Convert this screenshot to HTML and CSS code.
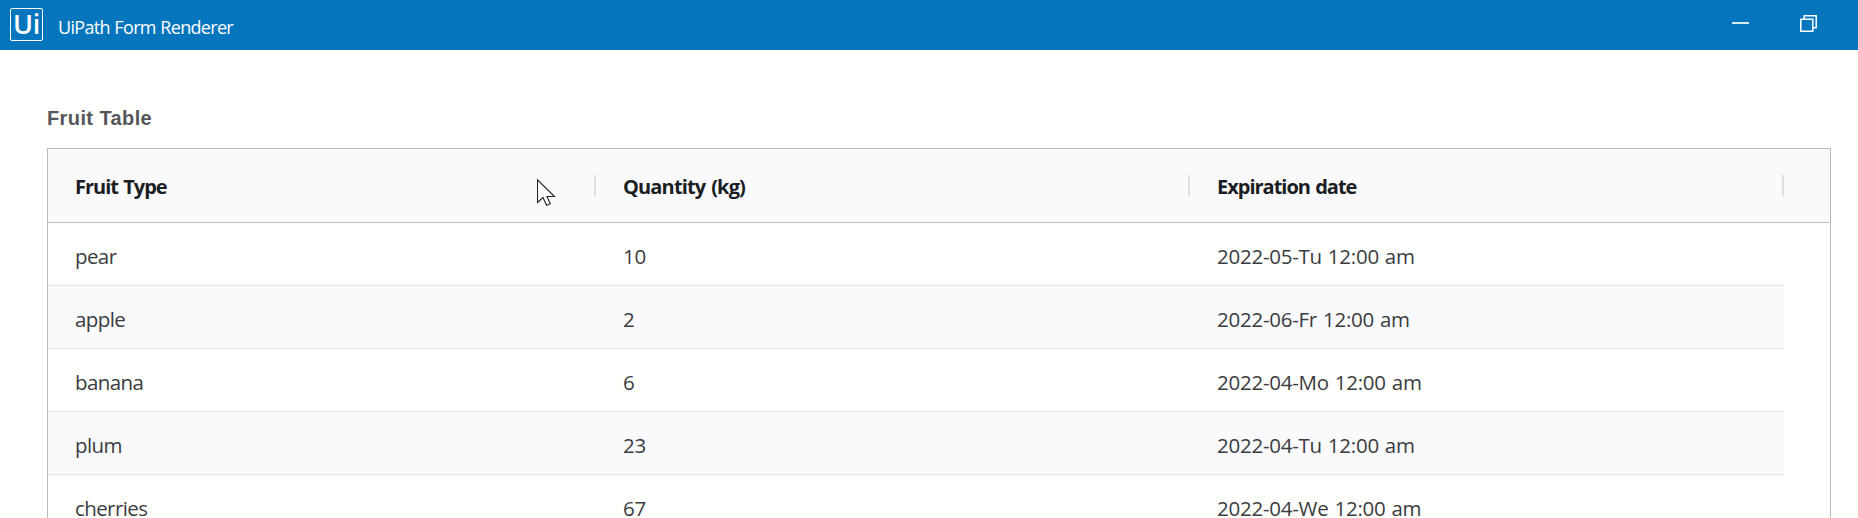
FILE: index.html
```html
<!DOCTYPE html>
<html lang="en">
<head>
<meta charset="utf-8">
<title>UiPath Form Renderer</title>
<link rel="stylesheet" href="styles.css">
</head>
<body>
<header class="titlebar">
  <div class="logo"><span>Ui</span></div>
  <div class="app-name">UiPath Form Renderer</div>
  <div class="controls">
    <svg width="17" height="17" viewBox="0 0 17 17"><path d="M0 8h17" stroke="#fff" stroke-width="1.7"/></svg>
    <svg width="17" height="17" viewBox="0 0 17 17" fill="none" stroke="#fff" stroke-width="1.5"><path d="M.8 4.2h12v12H.8zM4.2 4V.8h12v12H13"/></svg>
  </div>
</header>
<main class="form">
  <h1 class="label">Fruit Table</h1>
  <div class="grid">
    <div class="row head">
      <div class="cell type">Fruit Type</div>
      <div class="cell quantity">Quantity (kg)</div>
      <div class="cell expiration">Expiration date</div>
    </div>
    <div class="row"><div class="cell">pear</div><div class="cell number">10</div><div class="cell date">2022-05-Tu 12:00 am</div></div>
    <div class="row alt"><div class="cell">apple</div><div class="cell number">2</div><div class="cell date">2022-06-Fr 12:00 am</div></div>
    <div class="row"><div class="cell">banana</div><div class="cell number">6</div><div class="cell date">2022-04-Mo 12:00 am</div></div>
    <div class="row alt"><div class="cell">plum</div><div class="cell number">23</div><div class="cell date">2022-04-Tu 12:00 am</div></div>
    <div class="row last"><div class="cell">cherries</div><div class="cell number">67</div><div class="cell date">2022-04-We 12:00 am</div></div>
  </div>
</main>
<svg class="cursor" width="20" height="28" viewBox="0 0 20 28"><path d="M.5 .8V23.5L6 18.5L9.5 26.3L13.3 24.7L10 17.5H17.5Z" fill="#fff" stroke="#222" stroke-width="1.1"/></svg>
</body>
</html>
```

FILE: styles.css
```css
* { box-sizing: border-box; }
body {
  margin: 0;
  height: 518px;
  overflow: hidden;
  background: #fffffd;
  font-family: "Open Sans", "Noto Sans", sans-serif;
}
.titlebar {
  display: flex;
  height: 50px;
  padding: 8px 41px 0 10px;
  background: #0575be;
  color: #fff;
}
.logo {
  width: 33px;
  height: 33px;
  border: 1.5px solid #fff;
  border-radius: 2px;
  font: 600 27px/29px "Open Sans", sans-serif;
  letter-spacing: -0.3px;
  text-align: center;
}
.app-name {
  margin-left: 15px;
  font-size: 18px;
  line-height: 39px;
  letter-spacing: -0.68px;
  word-spacing: 0.5px;
}
.controls { display: flex; gap: 51px; margin: 7px 0 0 auto; }
.form { padding: 0 27px 0 47px; }
.label {
  margin: 0;
  height: 98px;
  padding-top: 56px;
  font: bold 20px/24px "Liberation Sans", Arial, sans-serif;
  letter-spacing: 0.4px;
  color: #55565a;
}
.grid {
  height: 370px;
  padding-right: 1px;
  border: 1px solid #b9babf;
  border-bottom: 0;
}
.row {
  display: grid;
  grid-template-columns: 548px 594px 594px;
  width: 1736px;
  height: 63px;
  border-bottom: 1px solid #dfe0e4;
}
.alt { background: #fafafd; }
.head {
  width: 100%;
  height: 74px;
  background: #fafafd;
  border-bottom-color: #b9babf;
}
.last { height: 43px; border-bottom: 0; }
.cell {
  padding-left: 27px;
  font-size: 20.5px;
  font-weight: 400;
  line-height: 66px;
  letter-spacing: -0.6px;
  color: #3a3c40;
  white-space: nowrap;
}
.number { letter-spacing: -0.3px; }
.date { letter-spacing: -0.25px; word-spacing: 0.9px; }
.head .cell {
  height: 21px;
  margin-top: 26px;
  border-right: 2px solid #dcdfe2;
  font-size: 20px;
  font-weight: 700;
  line-height: 24px;
  color: #1a1d21;
}
.head .type { letter-spacing: -1px; word-spacing: 1px; }
.head .quantity { letter-spacing: -0.85px; word-spacing: 1.5px; }
.head .expiration { letter-spacing: -1px; word-spacing: 1px; }
.cursor { position: absolute; left: 537px; top: 179px; }
```
